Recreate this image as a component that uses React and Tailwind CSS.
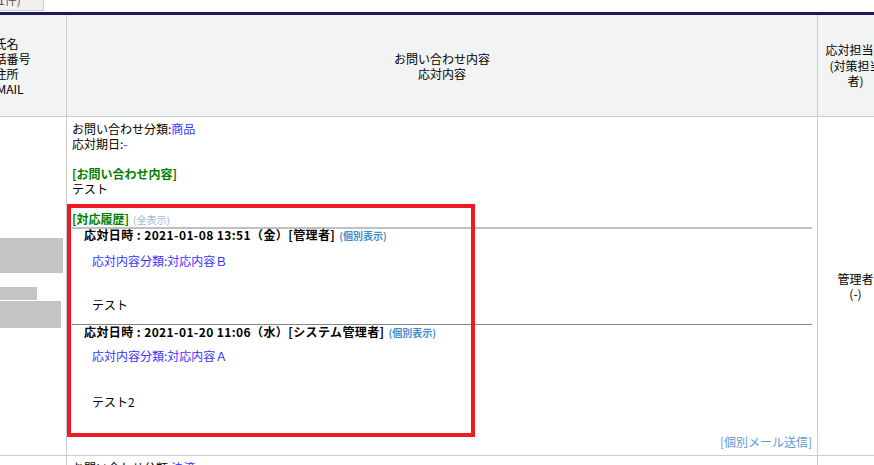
export default function App() {
  const font = { fontFamily: '"Noto Sans CJK JP", "Noto Sans", sans-serif' };
  return (
    <div className="relative w-[874px] h-[465px] overflow-hidden bg-white text-[12px] leading-[15px] text-black" style={font}>
      <div className="h-[12px] flex items-start">
        <div className="w-[44px] h-[11px] bg-[#f0f0f0] border-r border-b border-[#cccccc] overflow-hidden">
          <div className="-mt-[8px] -ml-[2px] text-[12px] leading-[15px] text-[#555]">1件)</div>
        </div>
      </div>
      <div className="-ml-[53px] w-[950px] border-t-[3px] border-[#1b1b5c]">
        {/* header row */}
        <div className="flex h-[102px] bg-[#f2f4f4] border-b border-[#cccccc]">
          <div className="w-[120px] border-r border-[#cccccc] flex items-center justify-center text-center">
            <div>氏名<br />電話番号<br />住所<br />EMAIL</div>
          </div>
          <div className="w-[751px] border-r border-[#cccccc] flex items-center justify-center text-center">
            <div>お問い合わせ内容<br />応対内容</div>
          </div>
          <div className="w-[75px] flex items-center justify-center text-center">
            <div className="leading-[15.5px]">応対担当者<br />(対策担当<br />者)</div>
          </div>
        </div>
        {/* body row */}
        <div className="flex h-[339px] border-b border-[#cccccc]">
          <div className="w-[120px] border-r border-[#cccccc] pt-[121px]">
            <div className="w-[116px] h-[35px] bg-[#c4c4c4]" />
            <div className="mt-[14px] w-[90px] h-[13px] bg-[#c4c4c4]" />
            <div className="mt-[1px] w-[114px] h-[27px] bg-[#c4c4c4]" />
          </div>
          <div className="w-[751px] border-r border-[#cccccc] pt-[4px] px-[5px] flex flex-col">
            <div>お問い合わせ分類:<span className="text-[#3333ff]">商品</span></div>
            <div>応対期日:<span className="text-[#3333ff]">-</span></div>
            <div className="h-[15px]" />
            <div className="text-[#008000] font-bold">[お問い合わせ内容]</div>
            <div>テスト</div>
            <div className="h-[15px]" />
            <div>
              <span className="text-[#008000] font-bold">[対応履歴]</span>
              <span className="ml-[4px] text-[10px] text-[#9cb8d6]">(全表示)</span>
            </div>
            <div className="h-[2px] bg-[#c0c0c0]" />
            <div className="pl-[12px] -mt-[2px]">
              <div className="font-bold tracking-[0.4px]">
                応対日時 : 2021-01-08 13:51（金）[管理者]
                <span className="ml-[4px] text-[10px] text-[#3f8ccc] tracking-normal">(個別表示)</span>
              </div>
              <div className="mt-[10px] pl-[8px] text-[#3333ff]">応対内容分類:対応内容Ｂ</div>
              <div className="mt-[29px] pl-[8px]">テスト</div>
            </div>
            <div className="mt-[12px] h-[1px] bg-[#858585]" />
            <div className="pl-[12px] -mt-[1px]">
              <div className="font-bold tracking-[0.4px]">
                応対日時 : 2021-01-20 11:06（水）[システム管理者]
                <span className="ml-[4px] text-[10px] text-[#3f8ccc] tracking-normal">(個別表示)</span>
              </div>
              <div className="mt-[8px] pl-[8px] text-[#3333ff]">応対内容分類:対応内容Ａ</div>
              <div className="mt-[31px] pl-[8px]">テスト2</div>
            </div>
            <div className="mt-[25px] text-right text-[#5d9ad6]">[個別メール送信]</div>
          </div>
          <div className="w-[75px] flex items-center justify-center text-center">
            <div>管理者<br />(-)</div>
          </div>
        </div>
        {/* next row */}
        <div className="flex h-[40px]">
          <div className="w-[120px] border-r border-[#cccccc]" />
          <div className="w-[751px] border-r border-[#cccccc] pt-[4px] px-[5px]">
            お問い合わせ分類:<span className="text-[#3333ff]">決済</span>
          </div>
          <div className="w-[75px]" />
        </div>
      </div>
      {/* annotation box */}
      <div className="absolute left-[67px] top-[204px] w-[408px] h-[233px] border-4 border-[#ed1c24]" />
    </div>
  );
}
